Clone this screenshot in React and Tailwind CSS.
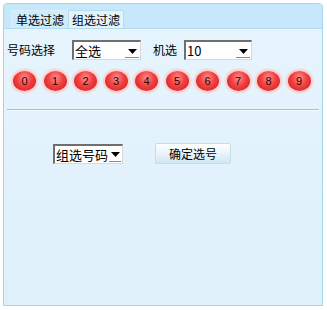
import React from "react";

const font = { fontFamily: '"Noto Sans CJK SC", "Liberation Sans", sans-serif' };

function Select({ value, width, arrowW = 16 }) {
  return (
    <div
      className="flex items-center h-[20px] bg-white border-l-2 border-t-2 border-r border-b border-l-[#6f6f6f] border-t-[#6f6f6f] border-r-[#d8d8d8] border-b-[#d8d8d8] overflow-hidden"
      style={{ width }}
    >
      <span className="flex-1 pl-[1px] text-[13px] leading-none text-black whitespace-nowrap">{value}</span>
      <div className="relative h-full flex items-center justify-center shrink-0" style={{ width: arrowW }}>
        <svg width="9" height="5" viewBox="0 0 9 5" className="mt-[1px]">
          <polygon points="0,0 9,0 4.5,5" fill="#000" />
        </svg>
        <div className="absolute bottom-[1px] left-[1px] right-[1px] h-[1px] bg-[#8a8a8a]" />
      </div>
    </div>
  );
}

function Ball({ n }) {
  return (
    <div className="w-[23px] h-[20px] rounded-[50%] flex items-center justify-center bg-[radial-gradient(ellipse_at_50%_35%,#ff9090_0%,#f04040_45%,#c81818_100%)] shadow-[0_0_2px_2px_#ffc8c8]">
      <span className="text-[11px] leading-none text-[#2a0000]" style={{ fontFamily: '"Liberation Sans", sans-serif' }}>{n}</span>
    </div>
  );
}

export default function App() {
  return (
    <div className="w-[327px] h-[310px] bg-white pt-[3px] pl-[3px]" style={font}>
      <div className="w-[320px] h-[303px] border border-[#a6d3ec] rounded-t-[4px] flex flex-col bg-[linear-gradient(180deg,#e6f4fd,#dff0fb)] overflow-hidden">
        <div className="h-[25px] shrink-0 bg-[#c6e8fa] border-b border-[#b3dcf1] flex items-end pl-[7px]">
          <div className="h-[18px] px-[4px] text-[12px] leading-[18px] text-black bg-[#cfecfa] border-t border-l border-[#d9f0fb]">单选过滤</div>
          <div className="h-[18px] px-[3px] text-[12px] leading-[18px] text-black bg-[#e2f3fc] border-t border-l border-r border-[#b8dcef]">组选过滤</div>
        </div>
        <div className="flex items-center mt-[11px] pl-[3px]">
          <span className="text-[12px] leading-none text-black">号码选择</span>
          <div className="ml-[17px]"><Select value="全选" width={69} /></div>
          <span className="ml-[12px] text-[12px] leading-none text-black">机选</span>
          <div className="ml-[7px]"><Select value="10" width={68} /></div>
        </div>
        <div className="flex items-center gap-[7.5px] mt-[11px] pl-[9px]">
          {[0, 1, 2, 3, 4, 5, 6, 7, 8, 9].map((n) => (
            <Ball key={n} n={n} />
          ))}
        </div>
        <div className="mt-[18px] mx-[3px] h-[2px] border-t border-[#a9bfcc] border-b border-b-[#f4fbff]" />
        <div className="flex items-center mt-[32px] pl-[49px]">
          <Select value="组选号码" width={70} arrowW={14} />
          <button className="ml-[32px] w-[76px] h-[21px] text-[12px] leading-none text-black bg-[linear-gradient(180deg,#ffffff,#e4f1f9_60%,#d2e7f4)] border border-[#c7dce9] rounded-[2px]">确定选号</button>
        </div>
      </div>
    </div>
  );
}
